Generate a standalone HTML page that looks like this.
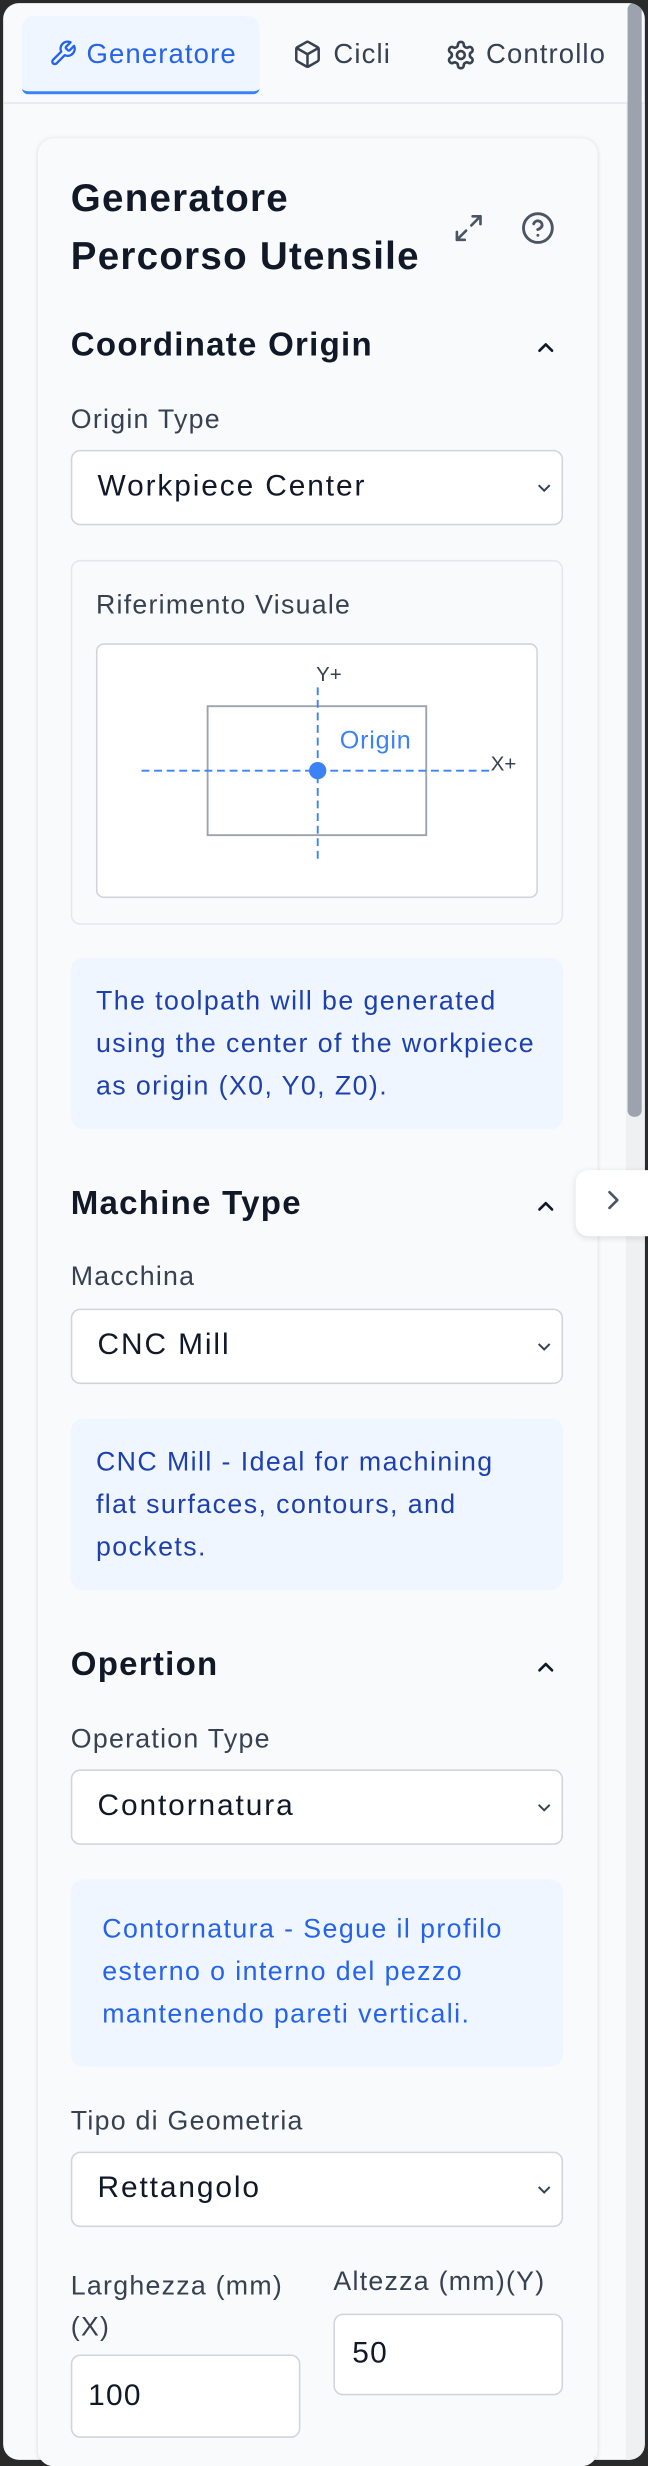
<!DOCTYPE html>
<html><head><meta charset="utf-8">
<style>
html,body{margin:0;padding:0;background:#2a2a2a;width:648px;height:2466px;overflow:hidden;}
#w{position:absolute;left:0;top:0;width:412px;height:1568px;transform:scale(1.5728);transform-origin:0 0;font-family:"Liberation Sans",sans-serif;}
.a{position:absolute;}
.panel{left:2px;top:2px;width:408px;height:1562px;background:#f8fafc;border-radius:10px;overflow:hidden;}
.lbl{position:absolute;left:45px;font-size:17px;letter-spacing:0.8px;color:#374151;line-height:20px;white-space:nowrap;}
.sel{position:absolute;left:45px;width:311px;height:46px;background:#fff;border:1px solid #d1d5db;border-radius:6px;}
.sel span{position:absolute;left:16px;top:12px;font-size:19px;letter-spacing:1.2px;color:#111827;white-space:nowrap;}
.sel svg{position:absolute;right:5px;top:17px;}
.h2{position:absolute;left:45px;font-size:21px;letter-spacing:0.8px;font-weight:bold;color:#111827;white-space:nowrap;}
.chev{position:absolute;left:339px;}
.info{position:absolute;left:45px;width:313px;background:#eff6ff;border-radius:8px;}
.info p{margin:0;position:absolute;left:16px;top:14px;font-size:17px;letter-spacing:0.9px;line-height:27px;color:#1e40af;white-space:nowrap;}
.inp{position:absolute;background:#fff;border:1px solid #d1d5db;border-radius:6px;font-size:19px;letter-spacing:0.8px;color:#111827;}
.tab{font-size:17.5px;letter-spacing:0.7px;}
</style></head><body>
<div id="w">
<div class="a panel">
  <div class="a" style="left:12px;top:8px;width:151px;height:48px;background:#eff6ff;border-radius:8px 8px 4px 4px;border-bottom:2px solid #3b82f6;"></div>
  <svg class="a" style="left:29px;top:23px" width="18" height="18" viewBox="0 0 24 24" fill="none" stroke="#2563eb" stroke-width="2" stroke-linecap="round" stroke-linejoin="round"><path d="M14.7 6.3a1 1 0 0 0 0 1.4l1.6 1.6a1 1 0 0 0 1.4 0l3.77-3.77a6 6 0 0 1-7.940 7.94l-6.91 6.91a2.12 2.12 0 0 1-3-3l6.91-6.91a6 6 0 0 1 7.94-7.94l-3.76 3.76z"/></svg>
  <div class="a tab" style="left:53px;top:22px;color:#2563eb;">Generatore</div>
  <svg class="a" style="left:184px;top:23px" width="19" height="19" viewBox="0 0 24 24" fill="none" stroke="#374151" stroke-width="2" stroke-linecap="round" stroke-linejoin="round"><path d="M21 16V8a2 2 0 0 0-1-1.73l-7-4a2 2 0 0 0-2 0l-7 4A2 2 0 0 0 3 8v8a2 2 0 0 0 1 1.73l7 4a2 2 0 0 0 2 0l7-4A2 2 0 0 0 21 16z"/><path d="M3.3 7 12 12l8.7-5"/><path d="M12 22V12"/></svg>
  <div class="a tab" style="left:210px;top:22px;color:#374151;">Cicli</div>
  <svg class="a" style="left:281px;top:23px" width="20" height="20" viewBox="0 0 24 24" fill="none" stroke="#374151" stroke-width="2" stroke-linecap="round" stroke-linejoin="round"><path d="M12.22 2h-.44a2 2 0 0 0-2 2v.18a2 2 0 0 1-1 1.730l-.43.25a2 2 0 0 1-2 0l-.15-.08a2 2 0 0 0-2.73.73l-.22.38a2 2 0 0 0 .73 2.73l.15.1a2 2 0 0 1 1 1.72v.51a2 2 0 0 1-1 1.74l-.15.09a2 2 0 0 0-.73 2.73l.22.38a2 2 0 0 0 2.73.73l.15-.08a2 2 0 0 1 2 0l.43.25a2 2 0 0 1 1 1.73V20a2 2 0 0 0 2 2h.44a2 2 0 0 0 2-2v-.18a2 2 0 0 1 1-1.73l.43-.25a2 2 0 0 1 2 0l.15.08a2 2 0 0 0 2.73-.73l.22-.39a2 2 0 0 0-.73-2.73l-.15-.08a2 2 0 0 1-1-1.74v-.5a2 2 0 0 1 1-1.74l.15-.09a2 2 0 0 0 .73-2.73l-.22-.38a2 2 0 0 0-2.73-.73l-.15.08a2 2 0 0 1-2 0l-.43-.25a2 2 0 0 1-1-1.73V4a2 2 0 0 0-2-2z"/><circle cx="12" cy="12" r="3"/></svg>
  <div class="a tab" style="left:307px;top:22px;color:#374151;">Controllo</div>
  <div class="a" style="left:0;top:63px;width:408px;height:1px;background:#e5e7eb;"></div>
  <div class="a" style="left:396px;top:64px;width:12px;height:1500px;background:#eef0f2;"></div>
  <div class="a" style="left:397px;top:0;width:9px;height:708px;background:#9ca3af;border-radius:4px;"></div>
</div>

<div class="a" style="left:24px;top:88px;width:356px;height:1480px;background:#f8fafc;border-radius:10px;box-shadow:0 0 3px rgba(0,0,0,0.08),0 1px 2px rgba(0,0,0,0.05);"></div>

<div class="a" style="left:45px;top:108px;font-size:24.5px;letter-spacing:0.8px;font-weight:bold;color:#111827;line-height:37px;white-space:nowrap;">Generatore<br>Percorso Utensile</div>
<svg class="a" style="left:288px;top:135px" width="20" height="20" viewBox="0 0 24 24" fill="none" stroke="#4b5563" stroke-width="2" stroke-linecap="round" stroke-linejoin="round"><path d="M15 3h6v6"/><path d="M9 21H3v-6"/><path d="M21 3l-7 7"/><path d="M3 21l7-7"/></svg>
<svg class="a" style="left:331px;top:134px" width="22" height="22" viewBox="0 0 24 24" fill="none" stroke="#4b5563" stroke-width="2" stroke-linecap="round" stroke-linejoin="round"><circle cx="12" cy="12" r="10"/><path d="M9.09 9a3 3 0 0 1 5.83 1c0 2-3 3-3 3"/><path d="M12 17h.01"/></svg>

<div class="h2" style="top:208px;">Coordinate Origin</div>
<svg class="chev" style="top:213px" width="16" height="16" viewBox="0 0 24 24" fill="none" stroke="#111827" stroke-width="2.5" stroke-linecap="round" stroke-linejoin="round"><path d="M18 15l-6-6-6 6"/></svg>
<div class="lbl" style="top:257px;">Origin Type</div>
<div class="sel" style="top:286px;"><span>Workpiece Center</span><svg width="12" height="12" viewBox="0 0 24 24" fill="none" stroke="#374151" stroke-width="2.5"><path d="M5 9l7 7 7-7"/></svg></div>

<div class="a" style="left:45px;top:356px;width:311px;height:230px;background:#f9fafb;border:1px solid #e5e7eb;border-radius:6px;"></div>
<div class="lbl" style="left:61px;top:375px;">Riferimento Visuale</div>
<div class="a" style="left:61px;top:409px;width:279px;height:160px;background:#fff;border:1px solid #d1d5db;border-radius:5px;"></div>
<svg class="a" style="left:0;top:0" width="412" height="600">
  <rect x="132" y="449" width="139" height="82" fill="none" stroke="#9ca3af" stroke-width="1.2"/>
  <line x1="90" y1="490" x2="312" y2="490" stroke="#3b82f6" stroke-width="1.2" stroke-dasharray="5,3"/>
  <line x1="202" y1="437" x2="202" y2="546" stroke="#3b82f6" stroke-width="1.2" stroke-dasharray="5,3"/>
  <circle cx="202" cy="490" r="5.5" fill="#3b82f6"/>
  <text x="312" y="490" font-family="Liberation Sans, sans-serif" font-size="13" fill="#374151">X+</text>
  <text x="201" y="433" font-family="Liberation Sans, sans-serif" font-size="13" fill="#374151">Y+</text>
  <text x="216" y="476" font-family="Liberation Sans, sans-serif" font-size="16" letter-spacing="0.5" fill="#3b82f6">Origin</text>
</svg>

<div class="info" style="top:609px;height:109px;"><p>The toolpath will be generated<br>using the center of the workpiece<br>as origin (X0, Y0, Z0).</p></div>

<div class="h2" style="top:754px;">Machine Type</div>
<svg class="chev" style="top:759px" width="16" height="16" viewBox="0 0 24 24" fill="none" stroke="#111827" stroke-width="2.5" stroke-linecap="round" stroke-linejoin="round"><path d="M18 15l-6-6-6 6"/></svg>
<div class="a" style="left:366px;top:744px;width:50px;height:42px;background:#fff;border-radius:8px 0 0 8px;box-shadow:0 1px 4px rgba(0,0,0,0.12);"></div>
<svg class="a" style="left:380px;top:753px" width="20" height="20" viewBox="0 0 24 24" fill="none" stroke="#4b5563" stroke-width="2" stroke-linecap="round" stroke-linejoin="round"><path d="M9 18l6-6-6-6"/></svg>
<div class="lbl" style="top:802px;">Macchina</div>
<div class="sel" style="top:832px;"><span>CNC Mill</span><svg width="12" height="12" viewBox="0 0 24 24" fill="none" stroke="#374151" stroke-width="2.5"><path d="M5 9l7 7 7-7"/></svg></div>
<div class="info" style="top:902px;height:109px;"><p>CNC Mill - Ideal for machining<br>flat surfaces, contours, and<br>pockets.</p></div>

<div class="h2" style="top:1047px;">Opertion</div>
<svg class="chev" style="top:1052px" width="16" height="16" viewBox="0 0 24 24" fill="none" stroke="#111827" stroke-width="2.5" stroke-linecap="round" stroke-linejoin="round"><path d="M18 15l-6-6-6 6"/></svg>
<div class="lbl" style="top:1096px;">Operation Type</div>
<div class="sel" style="top:1125px;"><span>Contornatura</span><svg width="12" height="12" viewBox="0 0 24 24" fill="none" stroke="#374151" stroke-width="2.5"><path d="M5 9l7 7 7-7"/></svg></div>
<div class="info" style="top:1195px;height:119px;"><p style="left:20px;top:18px;color:#2563eb;">Contornatura - Segue il profilo<br>esterno o interno del pezzo<br>mantenendo pareti verticali.</p></div>

<div class="lbl" style="top:1339px;">Tipo di Geometria</div>
<div class="sel" style="top:1368px;"><span>Rettangolo</span><svg width="12" height="12" viewBox="0 0 24 24" fill="none" stroke="#374151" stroke-width="2.5"><path d="M5 9l7 7 7-7"/></svg></div>

<div class="lbl" style="top:1441px;line-height:26px;">Larghezza (mm)<br>(X)</div>
<div class="lbl" style="left:212px;top:1441px;">Altezza (mm)(Y)</div>
<div class="inp" style="left:45px;top:1497px;width:144px;height:51px;"><span class="a" style="left:10px;top:15px;">100</span></div>
<div class="inp" style="left:212px;top:1471px;width:144px;height:50px;"><span class="a" style="left:11px;top:14px;">50</span></div>
</div>
</body></html>
